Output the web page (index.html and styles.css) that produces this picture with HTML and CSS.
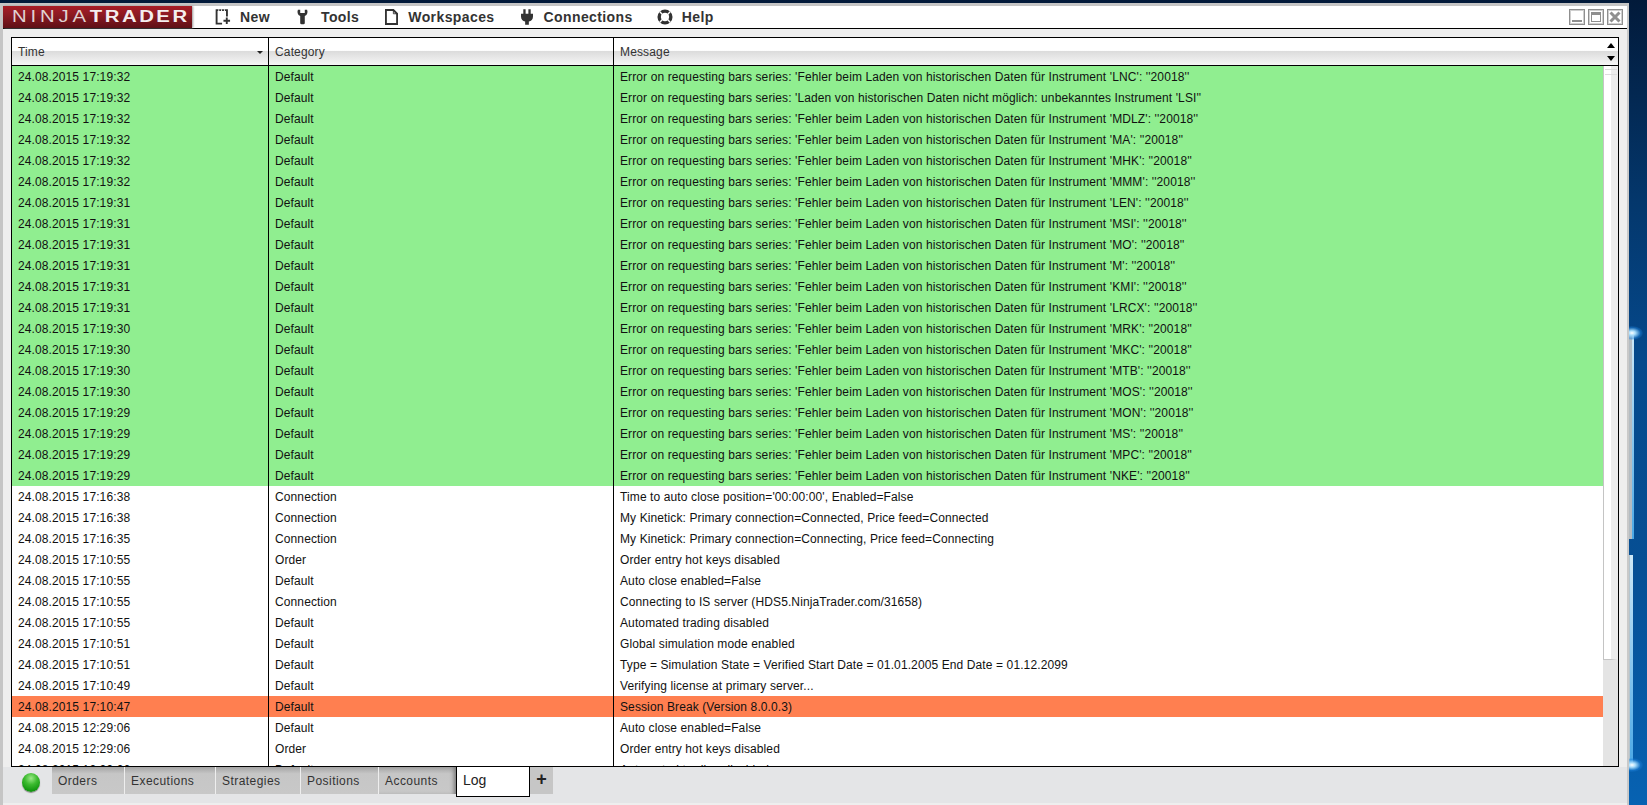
FILE: index.html
```html
<!DOCTYPE html>
<html lang="en">
<head>
<meta charset="utf-8">
<title>NinjaTrader Log</title>
<link rel="stylesheet" href="styles.css">
</head>
<body>
<div class="desktop">
  <div class="window">
    <div class="titlebar">
      <div class="logo"><div class="logo-text"><span class="logo-thin">NINJA</span><span class="logo-bold">TRADER</span></div></div>
      <nav class="menu">
        <div class="menu-item m-new">
          <svg class="ico" width="16" height="16" viewBox="0 0 16 17"><path d="M7 15.500H1.200V1.200h11V8" fill="none" stroke="#333" stroke-width="2"/><path d="M3 1.200h1M6 1.200h1M9 1.200h1" stroke="#fff" stroke-width="2"/><path d="M12 9v7M8.500 12.500h7" stroke="#333" stroke-width="2"/></svg>
          <span>New</span>
        </div>
        <div class="menu-item m-tools">
          <svg class="ico" width="11" height="16" viewBox="0 0 12 17"><path d="M1 0.500C0 3 0.500 6 3.500 7.500V15a1.500 1.500 0 0 0 1.500 1.500h2A1.500 1.500 0 0 0 8.500 15V7.500C11.500 6 12 3 11 0.500L8.500 0.500V4H3.500V0.500Z" fill="#333"/></svg>
          <span>Tools</span>
        </div>
        <div class="menu-item m-work">
          <svg class="ico" width="13" height="16" viewBox="0 0 14 17"><path d="M1 1h8l4 4v11H1Z" fill="none" stroke="#333" stroke-width="2"/><path d="M9 1v4h4" fill="none" stroke="#333" stroke-width="1"/></svg>
          <span>Workspaces</span>
        </div>
        <div class="menu-item m-conn">
          <svg class="ico" width="12" height="16" viewBox="0 0 13 17"><path d="M2.500 0h2.500v5h3V0h2.500v5H13v3c0 3-2 5-4.500 5.500V17h-4v-3.500C2 13 0 11 0 8V5h2.500Z" fill="#333"/></svg>
          <span>Connections</span>
        </div>
        <div class="menu-item m-help">
          <svg class="ico" width="16" height="16" viewBox="0 0 17 17"><circle cx="8.500" cy="8.500" r="6.200" fill="none" stroke="#333" stroke-width="3.600"/><path d="M3 3l3 3M14 3l-3 3M3 14l3-3M14 14l-3-3" stroke="#fff" stroke-width="1.500"/></svg>
          <span>Help</span>
        </div>
      </nav>
      <div class="win-buttons">
        <div class="win-btn"><span class="glyph-min"></span></div>
        <div class="win-btn"><span class="glyph-max"></span></div>
        <div class="win-btn"><svg width="12" height="12" viewBox="0 0 12 12"><path d="M1.500 1.500l9 9M10.500 1.500l-9 9" stroke="#8f8f8f" stroke-width="3"/></svg></div>
      </div>
    </div>
    <div class="content">
      <div class="grid-frame">
        <div class="grid-head">
          <div class="hcell c-time"><span>Time</span><span class="sort"></span></div>
          <div class="hcell c-cat">Category</div>
          <div class="hcell c-msg">Message</div>
          <div class="head-arrows"><span class="arrow-up"></span><span class="arrow-down"></span></div>
        </div>
        <div class="grid-body">
          <div class="rows">
            <div class="row green"><div class="c-time">24.08.2015 17:19:32</div><div class="c-cat">Default</div><div class="c-msg">Error on requesting bars series: 'Fehler beim Laden von historischen Daten für Instrument 'LNC': ''20018''</div></div>
            <div class="row green"><div class="c-time">24.08.2015 17:19:32</div><div class="c-cat">Default</div><div class="c-msg">Error on requesting bars series: 'Laden von historischen Daten nicht möglich: unbekanntes Instrument 'LSI''</div></div>
            <div class="row green"><div class="c-time">24.08.2015 17:19:32</div><div class="c-cat">Default</div><div class="c-msg">Error on requesting bars series: 'Fehler beim Laden von historischen Daten für Instrument 'MDLZ': ''20018''</div></div>
            <div class="row green"><div class="c-time">24.08.2015 17:19:32</div><div class="c-cat">Default</div><div class="c-msg">Error on requesting bars series: 'Fehler beim Laden von historischen Daten für Instrument 'MA': ''20018''</div></div>
            <div class="row green"><div class="c-time">24.08.2015 17:19:32</div><div class="c-cat">Default</div><div class="c-msg">Error on requesting bars series: 'Fehler beim Laden von historischen Daten für Instrument 'MHK': ''20018''</div></div>
            <div class="row green"><div class="c-time">24.08.2015 17:19:32</div><div class="c-cat">Default</div><div class="c-msg">Error on requesting bars series: 'Fehler beim Laden von historischen Daten für Instrument 'MMM': ''20018''</div></div>
            <div class="row green"><div class="c-time">24.08.2015 17:19:31</div><div class="c-cat">Default</div><div class="c-msg">Error on requesting bars series: 'Fehler beim Laden von historischen Daten für Instrument 'LEN': ''20018''</div></div>
            <div class="row green"><div class="c-time">24.08.2015 17:19:31</div><div class="c-cat">Default</div><div class="c-msg">Error on requesting bars series: 'Fehler beim Laden von historischen Daten für Instrument 'MSI': ''20018''</div></div>
            <div class="row green"><div class="c-time">24.08.2015 17:19:31</div><div class="c-cat">Default</div><div class="c-msg">Error on requesting bars series: 'Fehler beim Laden von historischen Daten für Instrument 'MO': ''20018''</div></div>
            <div class="row green"><div class="c-time">24.08.2015 17:19:31</div><div class="c-cat">Default</div><div class="c-msg">Error on requesting bars series: 'Fehler beim Laden von historischen Daten für Instrument 'M': ''20018''</div></div>
            <div class="row green"><div class="c-time">24.08.2015 17:19:31</div><div class="c-cat">Default</div><div class="c-msg">Error on requesting bars series: 'Fehler beim Laden von historischen Daten für Instrument 'KMI': ''20018''</div></div>
            <div class="row green"><div class="c-time">24.08.2015 17:19:31</div><div class="c-cat">Default</div><div class="c-msg">Error on requesting bars series: 'Fehler beim Laden von historischen Daten für Instrument 'LRCX': ''20018''</div></div>
            <div class="row green"><div class="c-time">24.08.2015 17:19:30</div><div class="c-cat">Default</div><div class="c-msg">Error on requesting bars series: 'Fehler beim Laden von historischen Daten für Instrument 'MRK': ''20018''</div></div>
            <div class="row green"><div class="c-time">24.08.2015 17:19:30</div><div class="c-cat">Default</div><div class="c-msg">Error on requesting bars series: 'Fehler beim Laden von historischen Daten für Instrument 'MKC': ''20018''</div></div>
            <div class="row green"><div class="c-time">24.08.2015 17:19:30</div><div class="c-cat">Default</div><div class="c-msg">Error on requesting bars series: 'Fehler beim Laden von historischen Daten für Instrument 'MTB': ''20018''</div></div>
            <div class="row green"><div class="c-time">24.08.2015 17:19:30</div><div class="c-cat">Default</div><div class="c-msg">Error on requesting bars series: 'Fehler beim Laden von historischen Daten für Instrument 'MOS': ''20018''</div></div>
            <div class="row green"><div class="c-time">24.08.2015 17:19:29</div><div class="c-cat">Default</div><div class="c-msg">Error on requesting bars series: 'Fehler beim Laden von historischen Daten für Instrument 'MON': ''20018''</div></div>
            <div class="row green"><div class="c-time">24.08.2015 17:19:29</div><div class="c-cat">Default</div><div class="c-msg">Error on requesting bars series: 'Fehler beim Laden von historischen Daten für Instrument 'MS': ''20018''</div></div>
            <div class="row green"><div class="c-time">24.08.2015 17:19:29</div><div class="c-cat">Default</div><div class="c-msg">Error on requesting bars series: 'Fehler beim Laden von historischen Daten für Instrument 'MPC': ''20018''</div></div>
            <div class="row green"><div class="c-time">24.08.2015 17:19:29</div><div class="c-cat">Default</div><div class="c-msg">Error on requesting bars series: 'Fehler beim Laden von historischen Daten für Instrument 'NKE': ''20018''</div></div>
            <div class="row"><div class="c-time">24.08.2015 17:16:38</div><div class="c-cat">Connection</div><div class="c-msg">Time to auto close position='00:00:00', Enabled=False</div></div>
            <div class="row"><div class="c-time">24.08.2015 17:16:38</div><div class="c-cat">Connection</div><div class="c-msg">My Kinetick: Primary connection=Connected, Price feed=Connected</div></div>
            <div class="row"><div class="c-time">24.08.2015 17:16:35</div><div class="c-cat">Connection</div><div class="c-msg">My Kinetick: Primary connection=Connecting, Price feed=Connecting</div></div>
            <div class="row"><div class="c-time">24.08.2015 17:10:55</div><div class="c-cat">Order</div><div class="c-msg">Order entry hot keys disabled</div></div>
            <div class="row"><div class="c-time">24.08.2015 17:10:55</div><div class="c-cat">Default</div><div class="c-msg">Auto close enabled=False</div></div>
            <div class="row"><div class="c-time">24.08.2015 17:10:55</div><div class="c-cat">Connection</div><div class="c-msg">Connecting to IS server (HDS5.NinjaTrader.com/31658)</div></div>
            <div class="row"><div class="c-time">24.08.2015 17:10:55</div><div class="c-cat">Default</div><div class="c-msg">Automated trading disabled</div></div>
            <div class="row"><div class="c-time">24.08.2015 17:10:51</div><div class="c-cat">Default</div><div class="c-msg">Global simulation mode enabled</div></div>
            <div class="row"><div class="c-time">24.08.2015 17:10:51</div><div class="c-cat">Default</div><div class="c-msg">Type = Simulation State = Verified Start Date = 01.01.2005 End Date = 01.12.2099</div></div>
            <div class="row"><div class="c-time">24.08.2015 17:10:49</div><div class="c-cat">Default</div><div class="c-msg">Verifying license at primary server...</div></div>
            <div class="row orange"><div class="c-time">24.08.2015 17:10:47</div><div class="c-cat">Default</div><div class="c-msg">Session Break (Version 8.0.0.3)</div></div>
            <div class="row"><div class="c-time">24.08.2015 12:29:06</div><div class="c-cat">Default</div><div class="c-msg">Auto close enabled=False</div></div>
            <div class="row"><div class="c-time">24.08.2015 12:29:06</div><div class="c-cat">Order</div><div class="c-msg">Order entry hot keys disabled</div></div>
            <div class="row"><div class="c-time">24.08.2015 12:29:06</div><div class="c-cat">Default</div><div class="c-msg">Automated trading disabled</div></div>
          </div>
          <div class="scrollbar"><div class="thumb"><span class="grip"></span></div></div>
        </div>
      </div>
      <div class="tabstrip">
        <div class="status-dot"></div>
        <div class="tab t-orders">Orders</div>
        <div class="tab t-exec">Executions</div>
        <div class="tab t-strat">Strategies</div>
        <div class="tab t-pos">Positions</div>
        <div class="tab t-acc">Accounts</div>
        <div class="tab-active">Log</div>
        <div class="tab-add">+</div>
      </div>
    </div>
  </div>
  <div class="wallpaper">
    <div class="light l1"></div>
    <div class="light l2"></div>
    <div class="flare f1"></div>
    <div class="flare f2"></div>
  </div>
</div>
</body>
</html>
```

FILE: styles.css
```css
* { box-sizing: border-box; }
html, body { margin: 0; height: 100%; overflow: hidden; }
body { font-family: "Liberation Sans", Arial, sans-serif; font-size: 12px; color: #111; background: #03264a; }

.desktop { display: flex; width: 1647px; height: 805px; background: linear-gradient(#021a3a 0, #04376c 25%, #05498c 45%, #064f94 70%, #0762b2 100%); }
.window { width: 1629px; height: 802px; margin-top: 3px; flex: none; display: flex; flex-direction: column; background: #e4e5e7; border-top: 3px solid #c5c5c5; border-left: 3px solid #c5c5c5; border-right: 2px solid #c9c9c9; }

.titlebar { height: 23px; flex: none; display: flex; align-items: center; background: #fff; border-bottom: 1px solid #000; }
.logo { width: 189px; height: 22px; flex: none; display: flex; align-items: center; padding-left: 9px; background: linear-gradient(#a81c26, #8c1a22 40%, #5e1016); box-shadow: 1px 0 2px #999; }
.logo-text { display: flex; flex: none; font-size: 16px; line-height: 22px; color: #e0d2d2; white-space: nowrap; transform: scaleX(1.27); transform-origin: left center; }
.logo-thin { font-weight: 400; letter-spacing: 3px; }
.logo-bold { font-weight: 700; letter-spacing: 2px; color: #f4eeee; }

.menu { display: flex; align-items: center; height: 22px; font-size: 14px; font-weight: 700; color: #333; letter-spacing: 0.400px; }
.menu-item { display: flex; align-items: center; }
.ico { flex: none; }
.m-new { margin-left: 23px; gap: 9px; }
.m-tools { margin-left: 27px; gap: 13px; }
.m-work { margin-left: 26px; gap: 10px; }
.m-conn { margin-left: 26px; gap: 11px; }
.m-help { margin-left: 24px; gap: 9px; }

.win-buttons { margin-left: auto; display: flex; gap: 3px; padding-right: 4px; }
.win-btn { width: 16px; height: 16px; border: 1px solid #8f8f8f; box-shadow: inset 0 0 0 1px #cfcfcf; display: flex; align-items: center; justify-content: center; }
.glyph-min { width: 10px; height: 2px; background: #8f8f8f; margin-top: 8px; }
.glyph-max { width: 10px; height: 10px; border: 1px solid #8f8f8f; border-top-width: 3px; }

.content { flex: 1; min-height: 0; padding: 8px 8px 0 8px; background: #eeeeee; display: flex; flex-direction: column; }
.grid-frame { height: 730px; flex: none; border: 1px solid #000; background: #fff; display: flex; flex-direction: column; overflow: hidden; }

.grid-head { height: 28px; flex: none; display: flex; border-bottom: 1px solid #000; color: #333; letter-spacing: 0.150px; background: linear-gradient(#fff 0, #fff 46%, #dcdcdc 50%, #e9e9e9 75%, #f6f6f6 100%); }
.hcell { line-height: 29px; height: 27px; position: relative; }
.c-time { width: 256px; flex: none; padding-left: 6px; }
.c-cat { width: 345px; flex: none; padding-left: 6px; border-left: 1px solid #000; }
.c-msg { flex: 1; padding-left: 6px; border-left: 1px solid #000; min-width: 0; }
.sort { position: absolute; right: 5px; top: 13px; border: 3px solid transparent; border-top: 3px solid #222; border-bottom: 0; }
.head-arrows { width: 14px; flex: none; display: flex; flex-direction: column; align-items: center; gap: 8px; padding-top: 5px; }
.arrow-up { border: 4.500px solid transparent; border-bottom: 5px solid #000; border-top: 0; }
.arrow-down { border: 4.500px solid transparent; border-top: 5px solid #000; border-bottom: 0; }

.grid-body { flex: 1; min-height: 0; display: flex; overflow: hidden; }
.rows { flex: 1; min-width: 0; }
.row { display: flex; height: 21px; line-height: 23px; background: #fff; white-space: nowrap; letter-spacing: 0.110px; }
.green { background: #90ee90; }
.orange { background: #ff7f50; }
.scrollbar { width: 15px; flex: none; background: #e4e4e4; }
.thumb { height: 594px; background: #fff; border-left: 1px solid #c4c4c4; border-bottom: 1px solid #c4c4c4; border-right: 7px solid #ececec; position: relative; }
.grip { display: block; position: absolute; left: 1px; right: -6px; top: 3px; height: 6px; border-top: 1px solid #ddd; border-bottom: 1px solid #ddd; }

.tabstrip { height: 36px; flex: none; display: flex; align-items: flex-start; background: #e4e5e7; margin: 0 -8px; padding-left: 19px; }
.status-dot { width: 18px; height: 19px; border-radius: 50%; margin: 6px 12px 0 0; flex: none; background: radial-gradient(circle at 50% 28%, #9be887 0, #3dbb30 38%, #169a12 72%, #0c7d0c 100%); box-shadow: 0 1px 1px #888; }
.tab { height: 27px; line-height: 28px; flex: none; padding-left: 6px; color: #333; letter-spacing: 0.450px; background: linear-gradient(#a4a4a4 0, #c6c6c6 25%, #c8c8c8 100%); border-right: 1px solid #eee; }
.t-orders { width: 73px; }
.t-exec { width: 91px; }
.t-strat { width: 85px; }
.t-pos { width: 78px; }
.t-acc { width: 77px; box-shadow: inset -4px 0 4px -2px #777; border-right: 0; }
.tab-active { width: 74px; height: 30px; line-height: 27px; flex: none; padding-left: 6px; font-size: 14px; color: #222; background: #fff; border: 1px solid #000; border-top: 0; }
.tab-add { width: 23px; height: 27px; line-height: 25px; flex: none; text-align: center; font-size: 18px; font-weight: 700; color: #222; background: #c6c6c6; }

.wallpaper { flex: 1; position: relative; overflow: hidden; }
.light { position: absolute; left: 0; background: linear-gradient(#cfe9f7, #4aa8e6); }
.l1 { top: 332px; height: 207px; width: 5px; border-left: 3px solid #b4bcc2; }
.l2 { top: 555px; height: 210px; width: 4px; border-left: 1px solid #b4c4ce; }
.flare { position: absolute; width: 22px; height: 14px; border-radius: 50%; left: -8px; background: radial-gradient(ellipse, #fff 0, #a8dcfb 22%, rgba(30,130,220,0.5) 55%, rgba(10,80,160,0) 75%); }
.f1 { top: 326px; }
.f2 { top: 758px; }
```
